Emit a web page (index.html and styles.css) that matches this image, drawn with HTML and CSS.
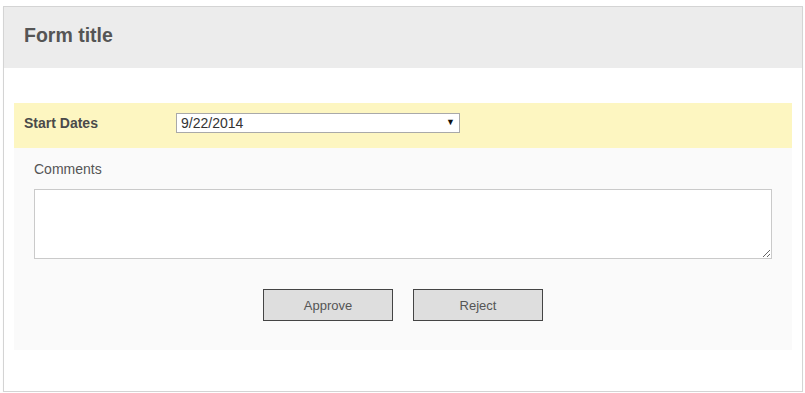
FILE: index.html
```html
<!DOCTYPE html>
<html lang="en">
<head>
  <meta charset="UTF-8" />
  <title>Form title</title>
  <link rel="stylesheet" href="styles.css">
</head>
<body>
  <div class="form">
    <div class="form-header">
      <h1>Form title</h1>
    </div>

    <div class="form-body">
      <div class="field-row">
        <label for="start-date" class="field-label">Start Dates</label>
        <div class="select-wrap">
          <select id="start-date">
            <option>9/22/2014</option>
          </select>
        </div>
      </div>

      <div class="comments">
        <label for="comments">Comments</label>
        <textarea id="comments"></textarea>

        <div class="actions">
          <button type="button">Approve</button>
          <button type="button">Reject</button>
        </div>
      </div>
    </div>
  </div>
</body>
</html>
```

FILE: styles.css
```css
body {
  margin: 0;
  padding: 6px 0 0 3px;
  font-family: 'Liberation Sans', Arial, sans-serif;
  font-size: 14px;
  color: #555;
  background: #fff;
}

.form {
  width: 798px;
  height: 384px;
  border: 1px solid #d4d4d4;
  box-shadow: 0 1px 1px rgba(0,0,0,0.05);
}

.form-header {
  height: 61px;
  background: #ececec;
  display: flex;
  align-items: center;
  padding-left: 20px;
}

.form-header h1 {
  margin: 0;
  font-size: 19.5px;
  font-weight: bold;
  color: #555;
  position: relative;
  top: -2px;
}

.form-body {
  padding: 35px 10px 0 10px;
}

.field-row {
  height: 45px;
  box-sizing: border-box;
  background: #fdf6c1;
  display: flex;
  align-items: flex-start;
  padding: 10px 0 0 10px;
}

.field-label {
  width: 152px;
  font-weight: bold;
  color: #4a4a4a;
  line-height: 20px;
}

.select-wrap {
  position: relative;
  width: 284px;
}

.select-wrap select {
  -webkit-appearance: none;
  appearance: none;
  width: 284px;
  height: 20px;
  margin: 0;
  padding: 0 0 0 4px;
  border: 1px solid #a9a9a9;
  border-radius: 0;
  background: #fff;
  font-family: 'Liberation Sans', Arial, sans-serif;
  font-size: 14px;
  color: #333;
  outline: none;
}

.select-wrap::after {
  content: "▼";
  position: absolute;
  right: 5px;
  top: 4px;
  font-size: 9px;
  color: #111;
  pointer-events: none;
}

.comments {
  background: #fafafa;
  height: 202px;
  box-sizing: border-box;
  padding: 13px 20px 0 20px;
}

.comments label {
  display: block;
  line-height: 16px;
  color: #555;
}

.comments textarea {
  display: block;
  width: 738px;
  height: 70px;
  box-sizing: border-box;
  margin-top: 12px;
  border: 1px solid #cacaca;
  background: #fff;
  resize: both;
  outline: none;
}

.actions {
  display: flex;
  justify-content: center;
  gap: 20px;
  margin-top: 30px;
}

.actions button {
  width: 130px;
  height: 32px;
  border: 1px solid #444;
  background: #dedede;
  color: #555;
  font-family: 'Liberation Sans', Arial, sans-serif;
  font-size: 13px;
  cursor: pointer;
}

.actions button:hover {
  background: #d2d2d2;
}
```
